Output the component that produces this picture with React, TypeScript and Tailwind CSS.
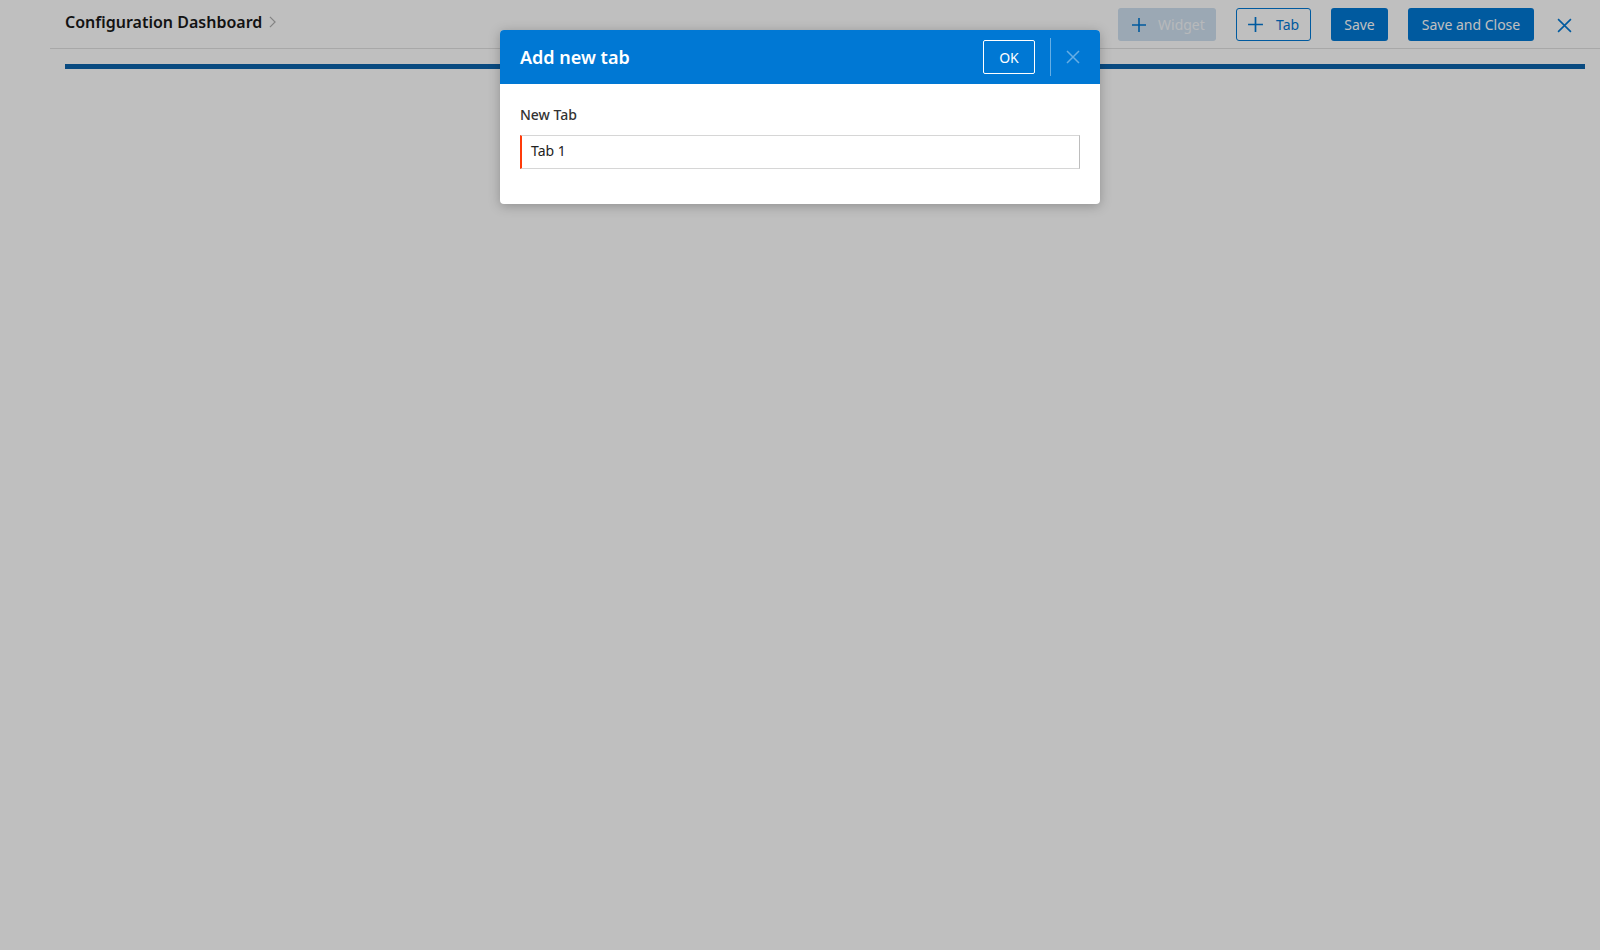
import React from "react";

const font = { fontFamily: '"Noto Sans", "Open Sans", sans-serif' };

function Plus({ className }: { className?: string }) {
  return (
    <svg viewBox="0 0 16 16" className={className} fill="none" stroke="currentColor" strokeWidth="1.6">
      <path d="M8 1v14M1 8h14" />
    </svg>
  );
}

function XIcon({ className }: { className?: string }) {
  return (
    <svg viewBox="0 0 14 14" className={className} fill="none" stroke="currentColor" strokeWidth="1.5">
      <path d="M1 1l12 12M13 1L1 13" />
    </svg>
  );
}

export default function App() {
  return (
    <div className="relative w-full h-[950px] bg-white overflow-hidden" style={font}>
      {/* page */}
      <div className="ml-[50px]">
        <div className="h-[49px] border-b border-[#e1e1e1] flex items-start justify-between pl-[15px] pr-[27px]">
          <div className="flex items-center pt-[10px]">
            <span className="text-[16px] font-semibold text-[#1a1a1a] leading-[24px]">Configuration Dashboard</span>
            <svg viewBox="0 0 8 14" className="w-[7px] h-[12px] ml-[7px] text-[#b0b0b0]" fill="none" stroke="currentColor" strokeWidth="1.4">
              <path d="M1 1l6 6-6 6" />
            </svg>
          </div>
          <div className="flex items-center pt-[8px]">
            <button className="h-[33px] w-[98px] rounded-[3px] bg-[#cfe0f0] flex items-center pl-[13px] text-[14px] text-[#f4f7fa]">
              <Plus className="w-[16px] h-[16px] text-[#0078d4]" />
              <span className="ml-[11px]">Widget</span>
            </button>
            <button className="ml-[20px] h-[33px] w-[75px] rounded-[3px] border border-[#0078d4] flex items-center pl-[10px] text-[14px] text-[#0078d4]">
              <Plus className="w-[17px] h-[17px]" />
              <span className="ml-[12px]">Tab</span>
            </button>
            <button className="ml-[20px] h-[33px] w-[57px] rounded-[3px] bg-[#0078d4] text-[14px] text-white">Save</button>
            <button className="ml-[20px] h-[33px] w-[126px] rounded-[3px] bg-[#0078d4] text-[14px] text-white">Save and Close</button>
            <button className="ml-[23px] mt-[1px] h-[16px] w-[16px] text-[#0078d4]">
              <XIcon className="w-[15px] h-[15px]" />
            </button>
          </div>
        </div>
        <div className="mx-[15px] mt-[15px] h-[5px] bg-[#0d63ab]" />
      </div>

      {/* overlay */}
      <div className="absolute inset-0 bg-black/25" />

      {/* dialog */}
      <div className="absolute left-[500px] top-[30px] w-[600px] bg-white rounded-[4px] shadow-[0_2px_12px_rgba(0,0,0,0.25)]">
        <div className="h-[54px] bg-[#0078d4] rounded-t-[4px] flex items-center justify-between pl-[20px] pr-[20px]">
          <span className="text-[18px] font-semibold text-white leading-[26px]">Add new tab</span>
          <div className="flex items-center">
            <button className="w-[52px] h-[34px] rounded-[2px] border border-white text-white text-[14px]">OK</button>
            <div className="ml-[15px] w-px h-[38px] bg-white/40" />
            <button className="ml-[15px] w-[14px] h-[14px] text-white/40">
              <XIcon className="w-[14px] h-[14px]" />
            </button>
          </div>
        </div>
        <div className="px-[20px] pt-[21px] pb-[35px]">
          <div className="text-[14px] font-medium text-[#333333] leading-[20px]">New Tab</div>
          <div className="mt-[10px] h-[34px] border border-[#d6d6d6] border-r-[#bdbdbd] border-l-[2px] border-l-[#ff3b0a] flex items-center pl-[9px] pb-[3px] text-[14px] text-[#222222]">
            Tab 1
          </div>
        </div>
      </div>
    </div>
  );
}
